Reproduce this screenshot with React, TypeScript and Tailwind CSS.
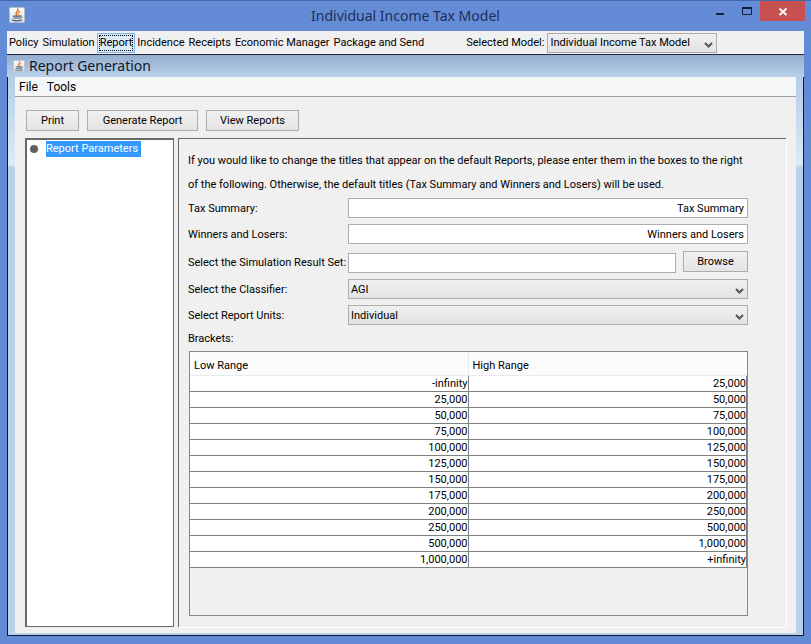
import type { ReactNode } from 'react'

const TOOLBAR = [
  'Policy',
  'Simulation',
  'Report',
  'Incidence',
  'Receipts',
  'Economic Manager',
  'Package and Send',
]

const BRACKETS: [string, string][] = [
  ['-infinity', '25,000'],
  ['25,000', '50,000'],
  ['50,000', '75,000'],
  ['75,000', '100,000'],
  ['100,000', '125,000'],
  ['125,000', '150,000'],
  ['150,000', '175,000'],
  ['175,000', '200,000'],
  ['200,000', '250,000'],
  ['250,000', '500,000'],
  ['500,000', '1,000,000'],
  ['1,000,000', '+infinity'],
]

function JavaIcon({ className }: { className: string }) {
  return (
    <svg viewBox="0 0 16 16" className={className} aria-hidden="true">
      <defs>
        <linearGradient id="tile" x1="0" y1="0" x2="0" y2="1">
          <stop offset="0" stopColor="#fdfdfd" />
          <stop offset="1" stopColor="#dcdfe2" />
        </linearGradient>
      </defs>
      <rect x="0.5" y="0.5" width="15" height="15" rx="1" fill="url(#tile)" stroke="#b4bcc8" />
      <g fill="none" strokeLinecap="round">
        <path d="M9 2C10 4.2 5.6 4.8 7.4 8" stroke="#e0702a" strokeWidth="1.5" />
        <path d="M10.8 4.4C9 5.2 8.8 5.8 9.2 7.8" stroke="#e58a3c" strokeWidth="1.2" />
        <path d="M4.4 9.2h6.2M5 11h5.6M3.2 13c2.8 1 6.8 1 9.4 0" stroke="#3f5a72" strokeWidth="1.2" />
        <path d="M11.4 8.8c2.2-.4 2 1.8 0 2.4" stroke="#3f5a72" strokeWidth="1" />
      </g>
    </svg>
  )
}

function PushButton({ children, className = '' }: { children: ReactNode; className?: string }) {
  return (
    <button
      className={`h-[21px] border border-[#acacac] bg-gradient-to-b from-[#f1f1f1] to-[#e4e4e4] text-center leading-none ${className}`}
    >
      {children}
    </button>
  )
}

interface ComboProps {
  id: string
  value: string
  className?: string
}

function Combo({ id, value, className = '' }: ComboProps) {
  return (
    <div className={`relative h-5 ${className}`}>
      <select
        id={id}
        defaultValue={value}
        className="block h-full w-full appearance-none border border-[#acacac] bg-gradient-to-b from-[#f0f0f0] to-[#e3e3e3] pt-px pr-5 pl-0.5 leading-4"
      >
        <option>{value}</option>
      </select>
      <svg viewBox="0 0 9 6" className="pointer-events-none absolute right-1 bottom-[5px] h-[6px] w-[9px]">
        <path d="M1 1l3.5 3.5L8 1" fill="none" stroke="#555" strokeWidth="2" />
      </svg>
    </div>
  )
}

function TitleBar() {
  return (
    <header className="relative flex h-[31px] shrink-0 items-center justify-center border-t border-[#4468ac]">
      <div className="absolute top-1.5 left-[9px]">
        <JavaIcon className="h-4 w-4" />
      </div>
      <h1 className="font-['Noto_Sans','Open_Sans',sans-serif] text-[14px] leading-5 text-[#1b2f5a]">
        Individual Income Tax Model
      </h1>
      <div className="absolute top-0 right-1.5 flex h-5 items-stretch">
        <button aria-label="Minimize" className="w-[27px]">
          <svg viewBox="0 0 27 20" className="h-5 w-[27px]">
            <path d="M10 13h8" stroke="#14213f" strokeWidth="2" />
          </svg>
        </button>
        <button aria-label="Maximize" className="w-[27px]">
          <svg viewBox="0 0 27 20" className="h-5 w-[27px]">
            <path d="M9.5 6v7.5h9V6" fill="none" stroke="#14213f" />
            <path d="M9 7h10" stroke="#14213f" strokeWidth="2" />
          </svg>
        </button>
        <button aria-label="Close" className="w-[45px] bg-[#c75050]">
          <svg viewBox="0 0 45 20" className="h-5 w-[45px]">
            <path d="M19.5 7.5l7 6.5M26.5 7.5l-7 6.5" stroke="#fff" strokeWidth="1.8" />
          </svg>
        </button>
      </div>
    </header>
  )
}

function ToolBar() {
  return (
    <div className="flex h-6 shrink-0 items-center border-b border-[#23283a] bg-[#f0f0f0]">
      <nav className="flex items-center">
        {TOOLBAR.map((item) =>
          item === 'Report' ? (
            <button key={item} className="h-5 border border-[#7eb4ea] bg-[#dcebfa] p-px">
              <span className="block border border-dotted border-black leading-[14px]">{item}</span>
            </button>
          ) : (
            <button key={item} className="px-0.5">
              {item}
            </button>
          ),
        )}
      </nav>
      <label htmlFor="model" className="ml-10">
        Selected Model:
      </label>
      <Combo id="model" value="Individual Income Tax Model" className="ml-[3px] w-[170px]" />
    </div>
  )
}

function ReportForm() {
  return (
    <form className="grid grow grid-cols-[160px_1fr] grid-rows-[44px_20px_20px_23px_20px_20px_14px_1fr] items-center gap-y-1.5 border-t border-l border-[#696969] pt-[9px] pr-[38px] pb-[11px] pl-[9px] shadow-[1px_1px_0_#fff] [&>label]:pt-0.5">
      <p className="col-span-2 self-start pt-px leading-6">
        If you would like to change the titles that appear on the default Reports, please enter them in the boxes to
        the right of the following. Otherwise, the default titles (Tax Summary and Winners and Losers) will be used.
      </p>

      <label htmlFor="tax">Tax Summary:</label>
      <input
        id="tax"
        defaultValue="Tax Summary"
        className="h-5 w-full border border-[#abadb3] bg-white px-[3px] text-right"
      />

      <label htmlFor="winners">Winners and Losers:</label>
      <input
        id="winners"
        defaultValue="Winners and Losers"
        className="h-5 w-full border border-[#abadb3] bg-white px-[3px] text-right"
      />

      <label htmlFor="results" className="whitespace-nowrap">
        Select the Simulation Result Set:
      </label>
      <div className="flex h-full items-center gap-[7px]">
        <input id="results" className="h-5 min-w-0 grow self-end border border-[#abadb3] bg-white px-[3px]" />
        <PushButton className="w-[65px]">Browse</PushButton>
      </div>

      <label htmlFor="classifier">Select the Classifier:</label>
      <Combo id="classifier" value="AGI" />

      <label htmlFor="units">Select Report Units:</label>
      <Combo id="units" value="Individual" />

      <h3 className="col-span-2 pt-0.5">Brackets:</h3>

      <div className="col-span-2 ml-px h-full border border-[#828790]">
        <table className="w-full table-fixed border-separate border-spacing-0">
          <thead>
            <tr className="h-6 bg-[#fcfcfd] text-left">
              <th className="border-r border-b border-[#e8eaf0] px-1 pt-1 font-normal">Low Range</th>
              <th className="border-b border-[#e8eaf0] px-1 pt-1 font-normal">High Range</th>
            </tr>
          </thead>
          <tbody>
            {BRACKETS.map(([low, high]) => (
              <tr key={low} className="h-4 bg-white text-right leading-[14px]">
                <td className="border-r border-b border-[#808080] p-0 pt-px">{low}</td>
                <td className="border-r border-b border-[#808080] p-0 pt-px">{high}</td>
              </tr>
            ))}
          </tbody>
        </table>
      </div>
    </form>
  )
}

export default function App() {
  return (
    <div className="flex min-h-screen flex-col bg-[#648cd6] font-[Roboto,sans-serif] text-[11px] leading-[14px] text-black">
      <TitleBar />

      <div className="mr-[7px] mb-2 ml-[7px] flex grow flex-col">
        <ToolBar />

        {/* Internal frame */}
        <div className="flex h-[22px] shrink-0 items-center gap-1 bg-gradient-to-b from-[#95aecf] to-[#b9d0e8] pl-1.5">
          <JavaIcon className="h-3 w-3" />
          <h2 className="font-['Noto_Sans','Open_Sans',sans-serif] text-[14px] leading-5 text-[#101828]">
            Report Generation
          </h2>
        </div>

        <div className="flex grow flex-col border-x border-b border-[#0b1a2c] bg-[linear-gradient(#b5cce6,#dcebf8_88px,#b9d1ea_90px)] px-[7px] pb-0.5">
          <nav className="flex h-5 shrink-0 items-center gap-[3px] border-b border-[#a0a0a0] bg-[#f5f6f7] pl-px text-[12px]">
            <button className="px-[3px]">File</button>
            <button className="px-[3px]">Tools</button>
          </nav>

          <main className="flex grow flex-col bg-[#f0f0f0] pt-[13px] pr-2.5 pb-1.5 pl-2.5">
            <div className="flex gap-2 pl-px">
              <PushButton className="w-[53px]">Print</PushButton>
              <PushButton className="w-[111px]">Generate Report</PushButton>
              <PushButton className="w-[93px]">View Reports</PushButton>
            </div>

            <div className="mt-[7px] flex grow gap-1">
              <ul className="w-[149px] shrink-0 border border-t-2 border-l-2 border-[#696969] bg-white">
                <li className="flex items-center gap-2 pt-px pl-[3px]">
                  <span className="h-2 w-2 rounded-full bg-[#606060]" />
                  <span className="bg-[#3399ff] pr-[3px] leading-4 text-white">Report Parameters</span>
                </li>
              </ul>
              <ReportForm />
            </div>
          </main>
        </div>
      </div>
    </div>
  )
}
